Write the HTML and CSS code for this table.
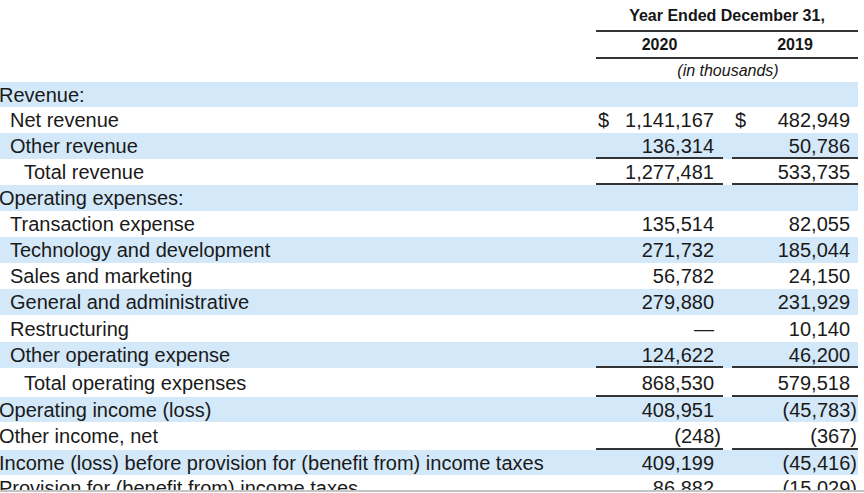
FILE: index.html
```html
<!DOCTYPE html>
<html lang="en">
<head>
<meta charset="utf-8">
<title>Statement of Operations</title>
<link rel="stylesheet" href="styles.css">
</head>
<body>
<div class="sheet">
<table class="fin">
  <colgroup>
    <col class="c-label">
    <col class="c-val">
    <col class="c-gap">
    <col class="c-val2">
  </colgroup>
  <thead>
    <tr class="h1">
      <th></th>
      <th colspan="3" class="rule">Year Ended December 31,</th>
    </tr>
    <tr class="h2">
      <th></th>
      <th class="rule">2020</th>
      <th class="rule"></th>
      <th class="rule">2019</th>
    </tr>
    <tr class="h3">
      <th></th>
      <th colspan="3" class="unit">(in thousands)</th>
    </tr>
  </thead>
  <tbody>
    <tr class="s r-25"><td class="l0">Revenue:</td><td></td><td></td><td></td></tr>
    <tr><td class="l1">Net revenue</td><td class="v1"><span class="cell"><span>$</span><span>1,141,167</span></span></td><td></td><td class="v2"><span class="cell"><span>$</span><span>482,949</span></span></td></tr>
    <tr class="s"><td class="l1">Other revenue</td><td class="v1 u">136,314</td><td></td><td class="v2 u">50,786</td></tr>
    <tr><td class="l2">Total revenue</td><td class="v1 u">1,277,481</td><td></td><td class="v2 u">533,735</td></tr>
    <tr class="s"><td class="l0">Operating expenses:</td><td></td><td></td><td></td></tr>
    <tr><td class="l1">Transaction expense</td><td class="v1">135,514</td><td></td><td class="v2">82,055</td></tr>
    <tr class="s"><td class="l1">Technology and development</td><td class="v1">271,732</td><td></td><td class="v2">185,044</td></tr>
    <tr><td class="l1">Sales and marketing</td><td class="v1">56,782</td><td></td><td class="v2">24,150</td></tr>
    <tr class="s"><td class="l1">General and administrative</td><td class="v1">279,880</td><td></td><td class="v2">231,929</td></tr>
    <tr class="r-27"><td class="l1">Restructuring</td><td class="v1">—</td><td></td><td class="v2">10,140</td></tr>
    <tr class="s"><td class="l1">Other operating expense</td><td class="v1 u">124,622</td><td></td><td class="v2 u">46,200</td></tr>
    <tr class="r-29"><td class="l2">Total operating expenses</td><td class="v1 u">868,530</td><td></td><td class="v2 u">579,518</td></tr>
    <tr class="s r-25"><td class="l0">Operating income (loss)</td><td class="v1">408,951</td><td></td><td class="v2">(45,783<span class="cp">)</span></td></tr>
    <tr class="r-28"><td class="l0">Other income, net</td><td class="v1 u">(248<span class="cp">)</span></td><td></td><td class="v2 u">(367<span class="cp">)</span></td></tr>
    <tr class="s r-25"><td class="l0">Income (loss) before provision for (benefit from) income taxes</td><td class="v1">409,199</td><td></td><td class="v2">(45,416<span class="cp">)</span></td></tr>
    <tr><td class="l0">Provision for (benefit from) income taxes</td><td class="v1">86,882</td><td></td><td class="v2">(15,029<span class="cp">)</span></td></tr>
  </tbody>
</table>
</div>
</body>
</html>
```
FILE: styles.css
```css
html, body {
  margin: 0;
  padding: 0;
  background: #ffffff;
}

body {
  width: 864px;
  height: 493px;
  overflow: hidden;
  font-family: "Liberation Sans", Arial, sans-serif;
  color: #1a1a1a;
}

.sheet {
  height: 490px;
  overflow: hidden;
  border-bottom: 2px solid #c4c4c4;
}

.fin {
  border-collapse: separate;
  border-spacing: 0;
  table-layout: fixed;
  width: 858px;
}

.c-label { width: 596px; }
.c-val { width: 127px; }
.c-gap { width: 9px; }
.c-val2 { width: 126px; }

/* Header */
.fin th {
  padding: 0;
  font-weight: bold;
  font-size: 16px;
  text-align: center;
  color: #161616;
}

.h1 th { height: 29px; vertical-align: middle; padding-top: 1px; line-height: 18px; }
.h2 th { height: 24px; line-height: 18px; padding-top: 1px; }
.h3 th { height: 23px; line-height: 18px; }

.rule {
  border-bottom: 2px solid #333333;
}

.unit {
  font-style: italic;
  font-weight: normal !important;
  padding-left: 2px !important;
}

/* Body rows */
.fin td {
  height: 26px;
  padding: 0;
  font-size: 20px;
  line-height: 22px;
  white-space: nowrap;
  vertical-align: middle;
}

.fin tr.s td {
  background: #d3e8f8;
}

.fin tr.r-25 td { height: 25px; }
.fin tr.r-27 td { height: 27px; }
.fin tr.r-28 td { height: 28px; }
.fin tr.r-29 td { height: 29px; }

.l0 { padding-left: 0; text-indent: -1px; }
.l1 { padding-left: 10px !important; }
.l2 { padding-left: 24px !important; }

.v1 {
  text-align: right;
  padding-left: 2px !important;
  padding-right: 9px !important;
}

.v2 {
  text-align: right;
  padding-left: 3px !important;
  padding-right: 8px !important;
}

.cell {
  display: flex;
  justify-content: space-between;
}

.cp {
  margin-right: -7px;
}

.u {
  box-shadow: inset 0 -2px 0 #333333;
}
```
